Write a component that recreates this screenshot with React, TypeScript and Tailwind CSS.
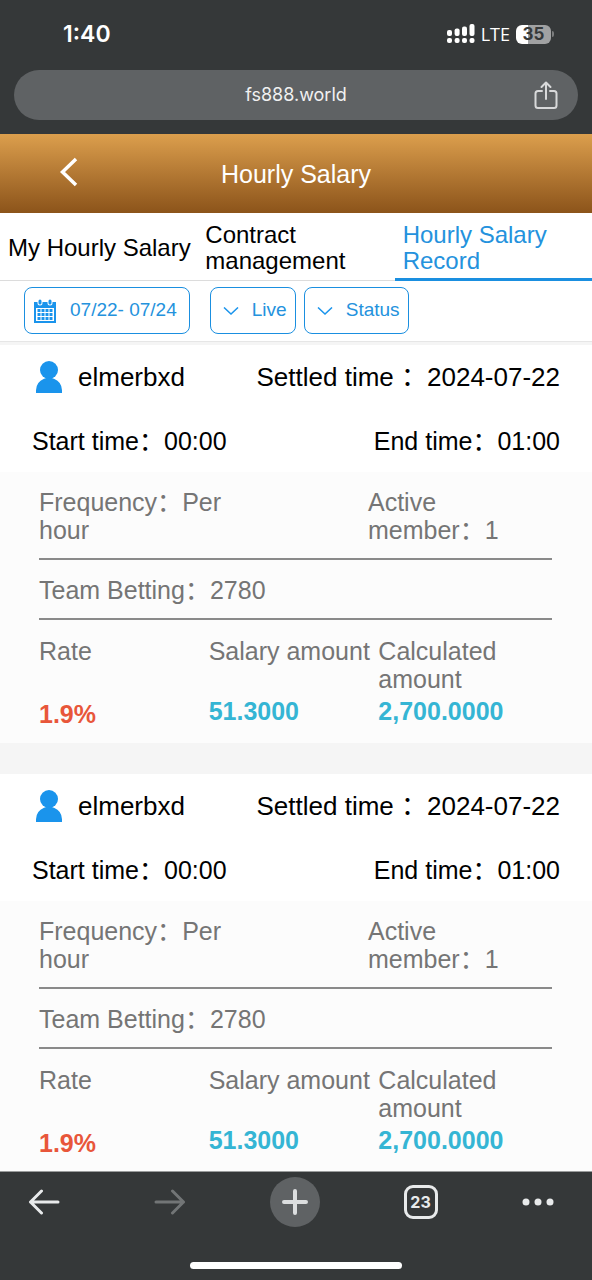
import { useState } from 'react'

interface SalaryRecord {
  id: number
  user: string
  settled: string
  start: string
  end: string
  frequency: string
  members: number
  betting: number
  rate: string
  salary: string
  calculated: string
}

const base = {
  user: 'elmerbxd',
  settled: '2024-07-22',
  start: '00:00',
  end: '01:00',
  frequency: 'Per hour',
  members: 1,
  betting: 2780,
  rate: '1.9%',
  salary: '51.3000',
  calculated: '2,700.0000',
}

const records: SalaryRecord[] = [
  { id: 1, ...base },
  { id: 2, ...base },
]

const tabs = ['My Hourly Salary', 'Contract management', 'Hourly Salary Record']

// Status bar
const StatusBar = () => (
  <div className="flex h-[70px] items-center justify-between pr-[38px] pb-[2px] pl-[63px] font-['Inter',sans-serif] text-white">
    <span className="text-[23px] leading-7 font-semibold">1:40</span>
    <div className="flex items-center gap-[6px]">
      <svg className="h-5 w-7" viewBox="0 0 28 20" fill="currentColor" aria-hidden="true">
        <rect x="0" y="6" width="5" height="6" rx="2" />
        <rect x="7.6" y="4.5" width="5" height="7.5" rx="2" />
        <rect x="15" y="2.5" width="5" height="9.5" rx="2" />
        <rect x="22.5" y="0" width="5" height="12" rx="2" />
        <rect x="0" y="14" width="5" height="5" rx="2" />
        <rect x="7.6" y="14" width="5" height="5" rx="2" />
        <rect x="15" y="14" width="5" height="5" rx="2" />
        <rect x="22.5" y="14" width="5" height="5" rx="2" />
      </svg>
      <span className="font-['Open_Sans',sans-serif] text-[18px] leading-6 font-medium">LTE</span>
      <div className="flex items-center gap-[1px]">
        <span className="flex h-[19px] w-[35px] items-center justify-center rounded-md bg-linear-to-r from-white from-35% to-[#a0a1a2] to-35% text-[17px] leading-5 font-bold text-[#353839]">
          35
        </span>
        <span className="h-[6px] w-[2px] rounded-r-full bg-[#7b7d7e]" />
      </div>
    </div>
  </div>
)

const PersonIcon = () => (
  <svg className="h-8 w-[26px]" viewBox="0 0 26 32" fill="#1a94ec" aria-hidden="true">
    <circle cx="13" cy="9" r="9" />
    <path d="M0 32v-2a13 13 0 0 1 8-12.300c3-1.200 7-1.200 10 0A13 13 0 0 1 26 30v2z" />
  </svg>
)

const CalendarIcon = () => (
  <svg className="h-6 w-[22px]" viewBox="0 0 22 24" aria-hidden="true">
    <path fill="#1a94ec" fillRule="evenodd" d="M0 3h22v21H0zM2 9v13h18V9z" />
    <path stroke="#fff" strokeWidth="5" strokeLinecap="round" d="M6 1.500v2.500M16 1.500v2.500" />
    <path stroke="#1a94ec" strokeWidth="3" strokeLinecap="round" d="M6 2v2M16 2v2" />
    <path
      stroke="#1a94ec"
      strokeWidth="3"
      strokeDasharray="3 1"
      d="M3.500 11.500h15M3.500 15.500h15M3.500 19.500h15"
    />
  </svg>
)

const FilterSelect = ({ label }: { label: string }) => (
  <div className="relative">
    <svg
      className="pointer-events-none absolute top-5 left-[13px] h-2 w-4"
      viewBox="0 0 16 8"
      fill="none"
      stroke="#1a94ec"
      strokeWidth="1.500"
      aria-hidden="true"
    >
      <path d="M1 .5l7 6.500 7-6.500" />
    </svg>
    <select
      aria-label={label}
      className="h-[47px] appearance-none rounded-lg border border-[#1a8fe0] bg-white pr-2 pl-[41px] text-[19px] text-[#2492dd]"
    >
      <option>{label}</option>
    </select>
  </div>
)

const RecordCard = ({ record }: { record: SalaryRecord }) => (
  <article>
    <div className="bg-white px-8 leading-8 text-black">
      <div className="flex h-16 items-center justify-between text-[26px]">
        <div className="flex items-center gap-4 pl-1">
          <PersonIcon />
          <span>{record.user}</span>
        </div>
        <span>Settled time ：{record.settled}</span>
      </div>
      <div className="flex h-[63px] items-center justify-between text-[25px]">
        <span>Start time：{record.start}</span>
        <span>End time：{record.end}</span>
      </div>
    </div>

    {/* Details */}
    <div className="bg-[#fcfcfc] pr-10 pl-[39px] text-[25px] leading-7 text-[#757575]">
      <div className="flex justify-between border-b-2 border-[#8a8a8a] pt-4 pb-[14px]">
        <p className="w-[200px]">Frequency：{record.frequency}</p>
        <p className="w-[184px]">Active member：{record.members}</p>
      </div>
      <p className="border-b-2 border-[#8a8a8a] pt-4 pb-[14px]">Team Betting：{record.betting}</p>
      <dl className="grid grid-cols-3 pt-[17px] pr-1 pb-[15px]">
        <div className="flex flex-col justify-between">
          <dt>Rate</dt>
          <dd className="font-bold text-[#e8563a]">{record.rate}</dd>
        </div>
        <div className="pb-[3px]">
          <dt className="h-14 whitespace-nowrap">Salary amount</dt>
          <dd className="mt-1 font-bold text-[#35b5d4]">{record.salary}</dd>
        </div>
        <div className="pb-[3px]">
          <dt className="h-14">Calculated amount</dt>
          <dd className="mt-1 font-bold text-[#35b5d4]">{record.calculated}</dd>
        </div>
      </dl>
    </div>
  </article>
)

const App = () => {
  const [activeTab, setActiveTab] = useState(2)

  return (
    <div className="flex h-screen flex-col overflow-hidden bg-[#f5f5f5] font-['Liberation_Sans','Noto_Sans_CJK_SC',sans-serif]">
      <div className="shrink-0 bg-[#353839] pb-[14px]">
        <StatusBar />
        {/* Address bar */}
        <div className="mx-[14px] grid h-[50px] grid-cols-[1fr_auto_1fr] items-center rounded-full bg-[#5f6264] pr-5 text-white">
          <a
            href="#"
            className="col-start-2 pl-5 font-['Inter',sans-serif] text-[18px] leading-6 text-[#f1f1f1]"
          >
            fs888.world
          </a>
          <button aria-label="Share" className="justify-self-end">
            <svg
              className="h-7 w-6"
              viewBox="0 0 24 28"
              fill="none"
              stroke="#d8d9da"
              strokeWidth="2"
              strokeLinecap="round"
              strokeLinejoin="round"
            >
              <path d="M8 10H4a2.500 2.500 0 0 0-2.500 2.500v12A2.500 2.500 0 0 0 4 27h16a2.500 2.500 0 0 0 2.500-2.500v-12A2.500 2.500 0 0 0 20 10h-4" />
              <path d="M12 18V2M7.500 6L12 1.500 16.500 6" />
            </svg>
          </button>
        </div>
      </div>

      {/* Title bar */}
      <header className="grid h-[79px] shrink-0 grid-cols-[1fr_auto_1fr] items-center bg-linear-to-b from-[#dc9f4d] to-[#8c541a] text-white">
        <button aria-label="Back" className="ml-[59px] justify-self-start pb-1">
          <svg className="h-[30px] w-5" viewBox="0 0 20 30" fill="none" stroke="currentColor" strokeWidth="3.500">
            <path d="M17 2L3.500 15 17 28" />
          </svg>
        </button>
        <h1 className="text-[25px] leading-8">Hourly Salary</h1>
      </header>

      {/* Tabs */}
      <nav className="grid h-[68px] shrink-0 grid-cols-3 border-b border-[#dcdcdc] bg-white">
        {tabs.map((tab, idx) => (
          <button
            key={tab}
            onClick={() => setActiveTab(idx)}
            className={`-mb-px border-b-3 pt-1 pl-2 text-left text-[24px] leading-[26px] ${
              activeTab === idx ? 'border-[#1a8fe0] text-[#2492dd]' : 'border-transparent text-black'
            }`}
          >
            {tab}
          </button>
        ))}
      </nav>

      {/* Filters */}
      <div className="flex h-[61px] shrink-0 items-start border-b border-[#e6e6e6] bg-white pt-[6px] pl-6">
        <button className="mr-5 flex h-[47px] items-center gap-[14px] rounded-lg border border-[#1a8fe0] pr-3 pl-[9px] text-[19px] text-[#2492dd]">
          <CalendarIcon />
          07/22- 07/24
        </button>
        <div className="flex gap-2">
          <FilterSelect label="Live" />
          <FilterSelect label="Status" />
        </div>
      </div>

      {/* Record list */}
      <main className="flex min-h-0 flex-1 flex-col gap-[31px] overflow-hidden pt-[3px]">
        {records.map((record) => (
          <RecordCard key={record.id} record={record} />
        ))}
      </main>

      {/* Browser toolbar */}
      <footer className="flex h-[109px] shrink-0 flex-col items-center justify-between border-t border-[#9a9c9c] bg-[#353839] pt-[5px] pb-[11px]">
        <div className="flex w-full items-center justify-between pr-[37px] pl-[19px] text-[#e8eaeb]">
          <button aria-label="Go back" className="flex size-[50px] items-center justify-center">
            <svg className="h-[26px] w-8" viewBox="0 0 32 26" fill="none" stroke="currentColor" strokeWidth="3" strokeLinecap="round" strokeLinejoin="round">
              <path d="M30 13H2.500M13.500 2L2.500 13l11 11" />
            </svg>
          </button>
          <button aria-label="Go forward" className="flex size-[50px] items-center justify-center text-[#727576]">
            <svg className="h-[26px] w-8" viewBox="0 0 32 26" fill="none" stroke="currentColor" strokeWidth="3" strokeLinecap="round" strokeLinejoin="round">
              <path d="M2 13h27.500M18.500 2l11 11-11 11" />
            </svg>
          </button>
          <button aria-label="New tab" className="flex size-[50px] items-center justify-center rounded-full bg-[#5f6264]">
            <svg className="size-[26px]" viewBox="0 0 26 26" stroke="#dcdedf" strokeWidth="4" strokeLinecap="round">
              <path d="M13 2v22M2 13h22" />
            </svg>
          </button>
          <button aria-label="Tabs" className="flex size-[50px] items-center justify-center">
            <span className="flex size-[34px] items-center justify-center rounded-[9px] border-3 border-current font-['Inter',sans-serif] text-[16px] leading-5 font-bold">
              23
            </span>
          </button>
          <button aria-label="More" className="flex h-[50px] w-[34px] items-center justify-center">
            <svg className="h-2 w-8" viewBox="0 0 32 8" fill="currentColor">
              <circle cx="4" cy="4" r="3.500" />
              <circle cx="16" cy="4" r="3.500" />
              <circle cx="28" cy="4" r="3.500" />
            </svg>
          </button>
        </div>
        <div className="h-[7px] w-[212px] rounded-full bg-white" />
      </footer>
    </div>
  )
}

export default App
